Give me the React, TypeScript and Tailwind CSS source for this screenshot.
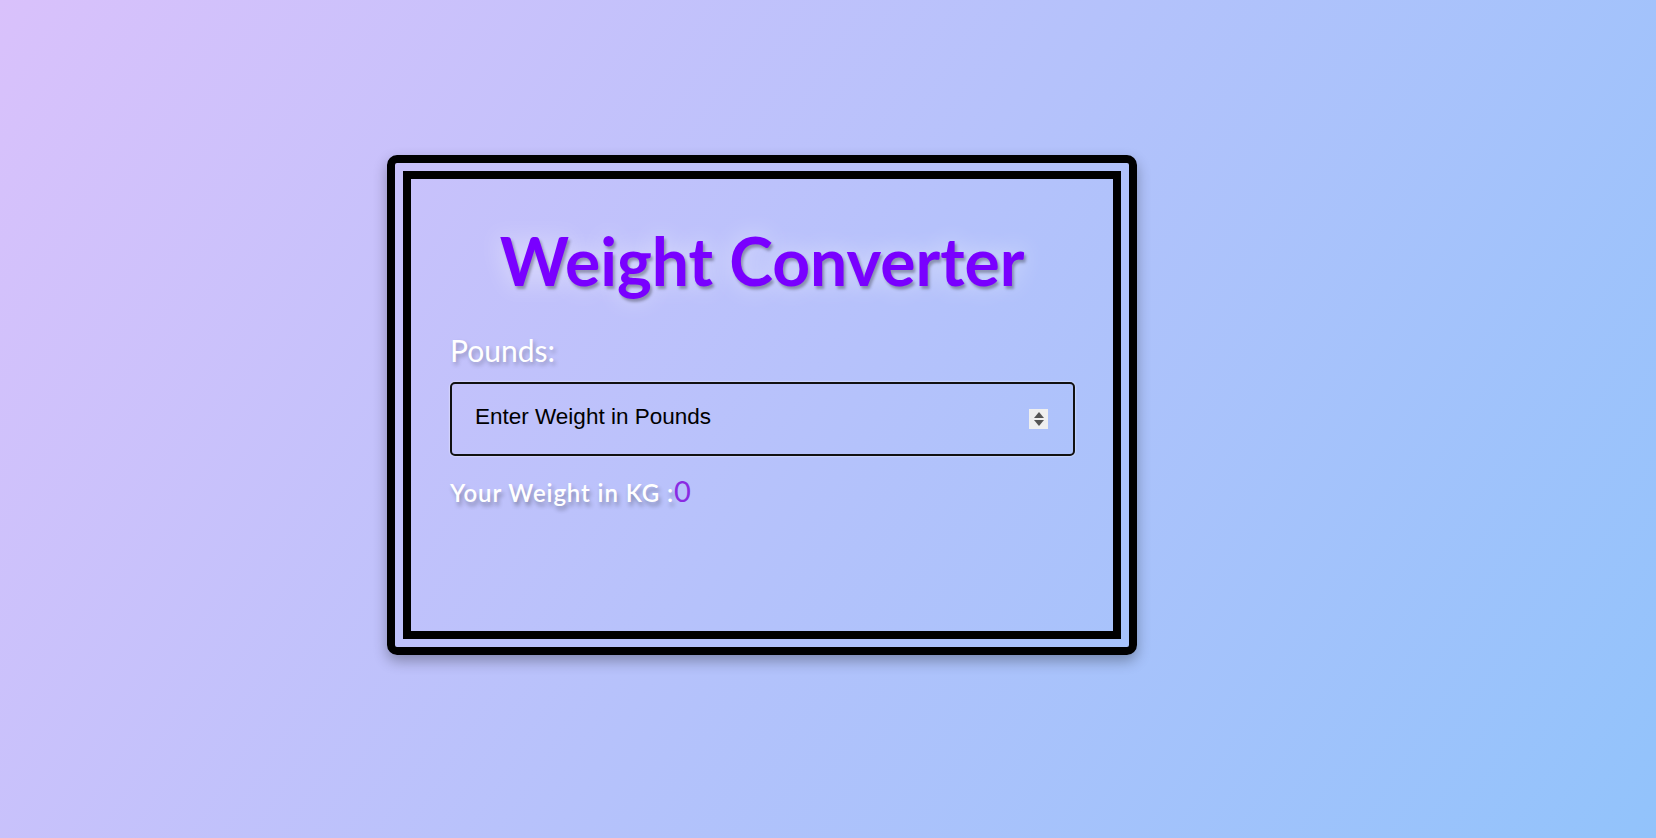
import React, { useState } from 'react';

export default function App() {
  const [pounds, setPounds] = useState('');
  const kg = pounds === '' ? 0 : Math.round((parseFloat(pounds) / 2.2046) * 100) / 100;

  const step = (d: number) => {
    const v = pounds === '' ? 0 : parseFloat(pounds);
    setPounds(String(v + d));
  };

  return (
    <div className="min-h-screen w-full bg-[linear-gradient(122deg,#d9c1fb,#92c3fb)] pt-[155px] pl-[387px] font-['Lato',sans-serif]">
      <div className="w-[750px] h-[500px] border-[24px] border-double border-black rounded-[10px] shadow-[0_6px_14px_rgba(0,0,0,0.3)]">
        <div className="flex flex-col px-[39px]">
          <h1 className="mt-[42px] text-center text-[66px] leading-[1.2] font-bold text-[#7900ff] [text-shadow:2px_3px_3px_rgba(0,0,0,0.3),0_0_25px_rgba(255,255,255,0.6)]">
            Weight Converter
          </h1>

          <label
            htmlFor="pounds"
            className="mt-[32px] text-[30px] leading-[1.2] text-white [text-shadow:2px_3px_4px_rgba(0,0,0,0.25)]"
          >
            Pounds:
          </label>

          <div className="relative mt-[14px] w-[625px]">
            <input
              id="pounds"
              type="number"
              value={pounds}
              onChange={(e) => setPounds(e.target.value)}
              placeholder="Enter Weight in Pounds"
              className="h-[74px] w-full rounded-[5px] border-2 border-[#111] bg-transparent pl-[23px] pr-[50px] pb-[5px] font-['Liberation_Sans',Arial,sans-serif] text-[22.5px] text-black outline-none shadow-[0_0_2px_#fff] placeholder:text-black [appearance:textfield] [&::-webkit-inner-spin-button]:appearance-none [&::-webkit-outer-spin-button]:appearance-none"
            />
            {/* spin buttons */}
            <div className="absolute right-[27px] top-[27px] flex h-[20px] w-[19px] flex-col items-center justify-center gap-[2px] bg-[#efefef]">
              <button onClick={() => step(1)} className="h-0 w-0 border-x-[5px] border-b-[6px] border-x-transparent border-b-[#555]" />
              <button onClick={() => step(-1)} className="h-0 w-0 border-x-[5px] border-t-[6px] border-x-transparent border-t-[#555]" />
            </div>
          </div>

          <div className="mt-[18px] flex items-baseline leading-[1.2]">
            <span className="text-[24px] font-semibold tracking-[0.9px] text-white [text-shadow:2px_4px_4px_rgba(0,0,0,0.3)]">
              Your Weight in KG :
            </span>
            <span className="text-[29px] text-[#8a2be2]">{kg}</span>
          </div>
        </div>
      </div>
    </div>
  );
}
